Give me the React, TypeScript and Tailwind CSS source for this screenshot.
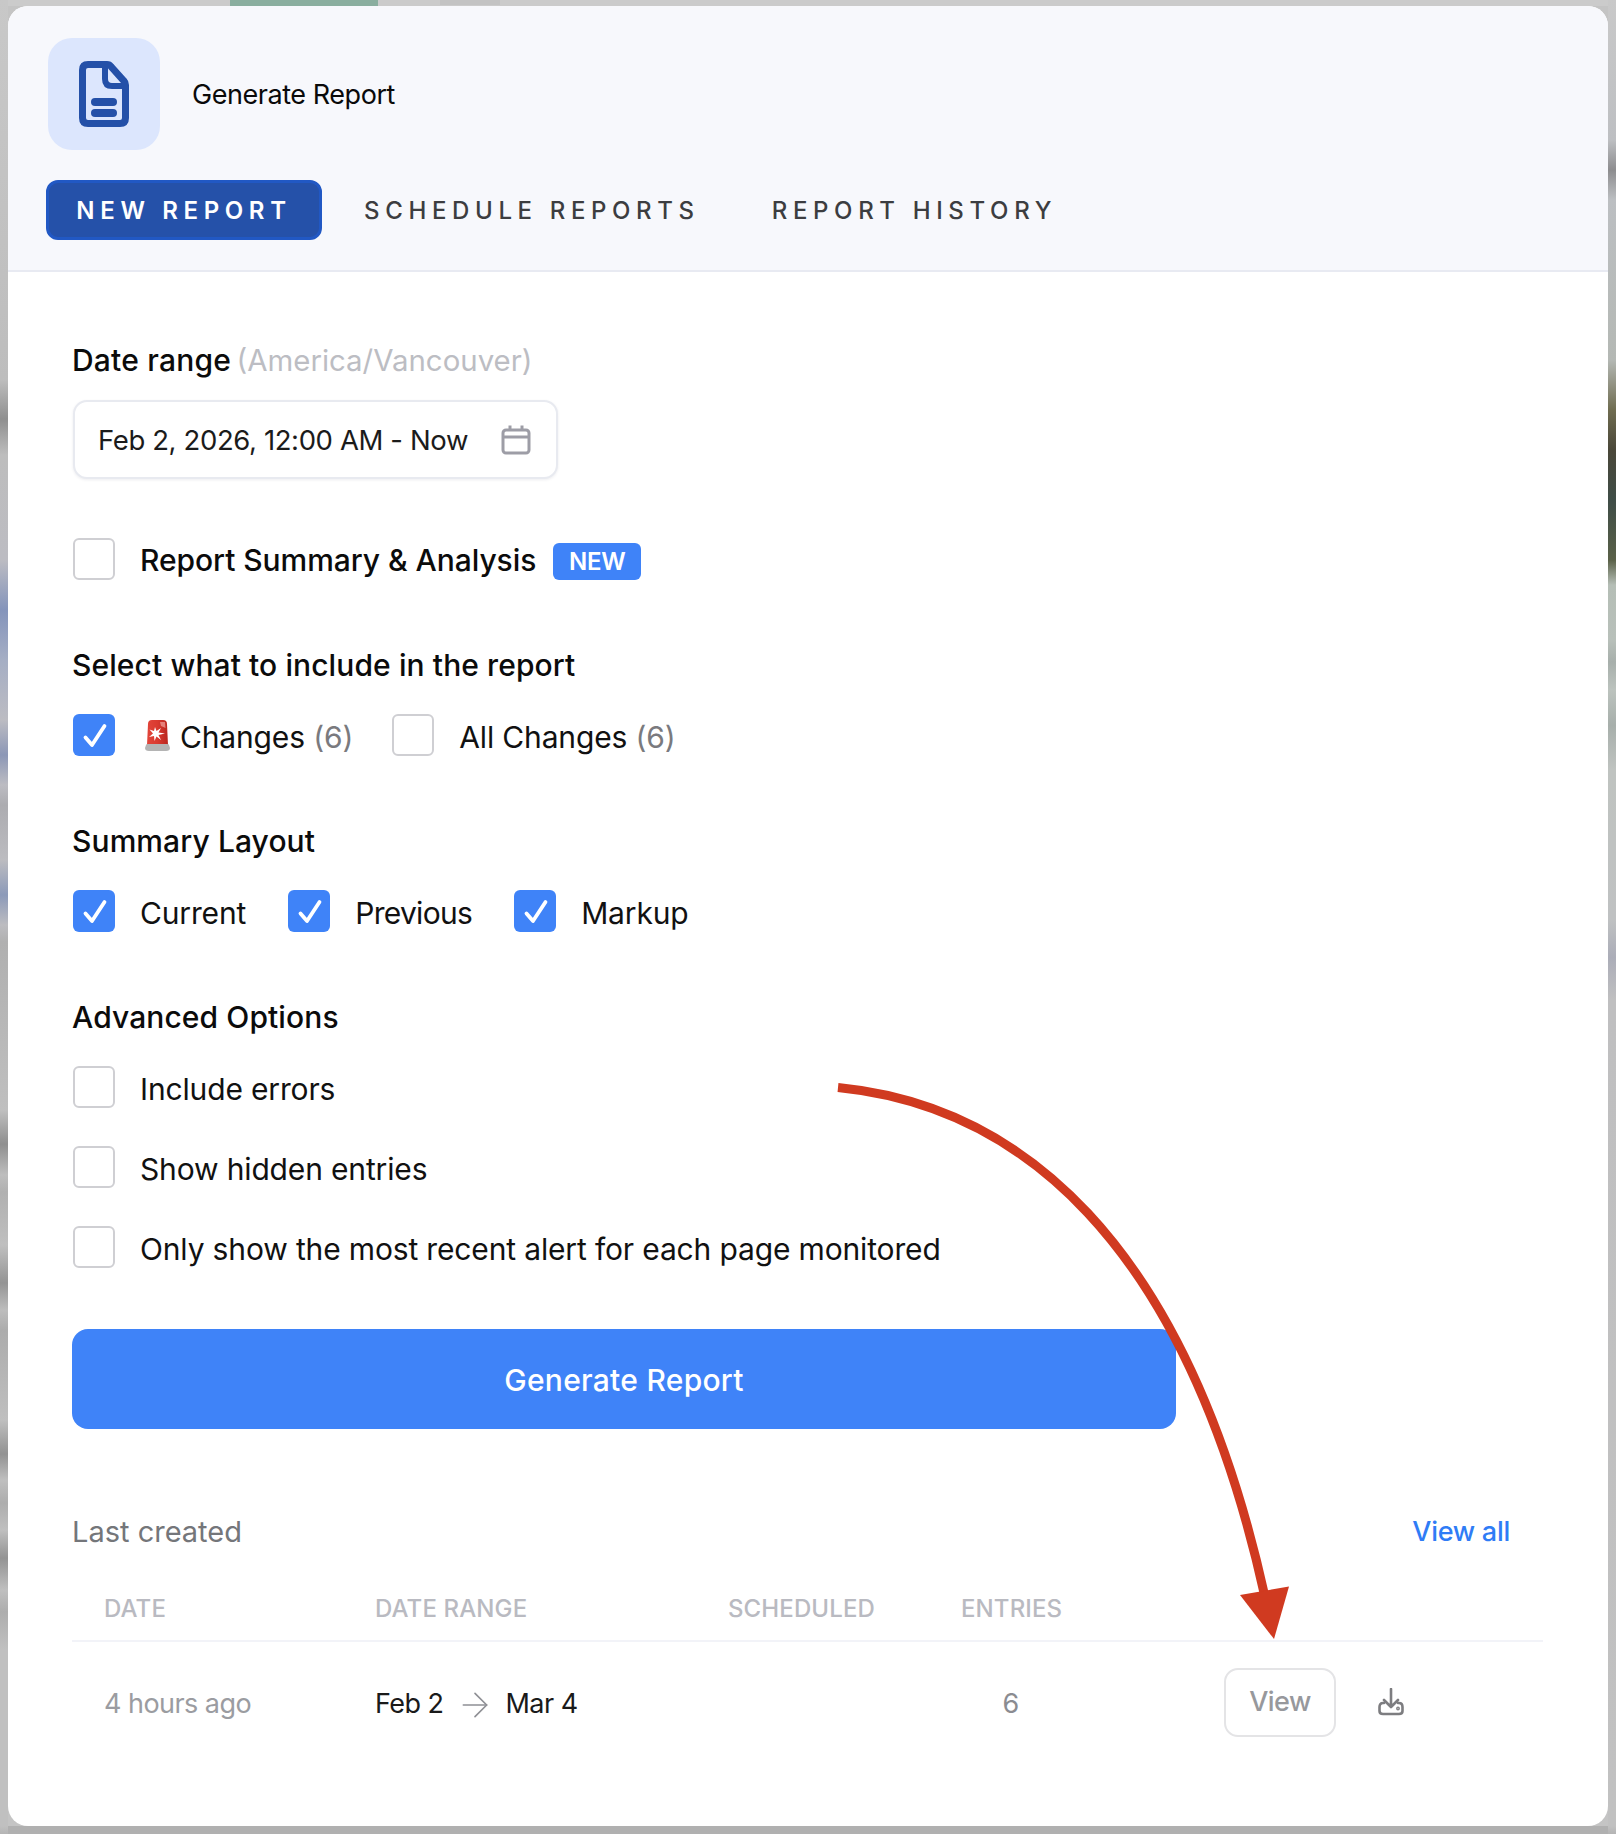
import React from "react";
import { ArrowRight } from "lucide-react";

const font = { fontFamily: '"Inter", "Liberation Sans", sans-serif' };

function Box({ checked = false }: { checked?: boolean }) {
  if (checked) {
    return (
      <span className="ml-[1px] block h-[42px] w-[42px] shrink-0 rounded-[6px] bg-[#3f83f8]">
        <svg width="42" height="42" viewBox="0 0 42 42" fill="none">
          <path d="M12.5 23.5 L19 31 L31.5 12" stroke="#fff" strokeWidth="3.8" strokeLinecap="round" strokeLinejoin="round" />
        </svg>
      </span>
    );
  }
  return <span className="ml-[1px] block h-[42px] w-[42px] shrink-0 rounded-[6px] border-2 border-[#cfcfd3] bg-white" />;
}

function Option({ checked, narrow, children }: { checked?: boolean; narrow?: boolean; children: React.ReactNode }) {
  return (
    <div className={narrow ? "flex h-[42px] items-center gap-[25px] text-[30px] tracking-[-0.7px] text-[#111]" : "flex h-[42px] items-center gap-[25px] text-[30px] tracking-[-0.15px] text-[#111]"}>
      <Box checked={checked} />
      <span className="whitespace-nowrap pt-[4px] leading-[38px]">{children}</span>
    </div>
  );
}

function Heading({ children }: { children: React.ReactNode }) {
  return <h3 className="h-[40px] pt-[2px] text-[30px] font-medium leading-[40px] tracking-[0.1px] text-[#0b0b0b]">{children}</h3>;
}

function Siren() {
  return (
    <svg width="25" height="32" viewBox="0 0 25 32" className="shrink-0">
      <defs>
        <linearGradient id="dome" x1="0" y1="0" x2="1" y2="0">
          <stop offset="0" stopColor="#e2453a" />
          <stop offset="0.5" stopColor="#d93a30" />
          <stop offset="1" stopColor="#b9261f" />
        </linearGradient>
      </defs>
      <path d="M3 5 Q3 1 7 1 H18 Q22 1 22 5 L23 26 H2 Z" fill="url(#dome)" />
      <path d="M1 26 Q1 25 3 25 H22 Q24 25 24 26 L25 29 Q25 32 21 32 H4 Q0 32 0 29 Z" fill="#b4b4b4" />
      <path d="M10 8 L11.5 12 L16 9 L13.5 13.5 L20 14.5 L13.5 16 L16 21 L11.5 17.5 L9.5 22 L9 17 L4 18 L8 14.5 L4.5 10.5 L9 12 Z" fill="#fff" />
      <path d="M15 3 H20 L20.5 9 L16 7 Z" fill="#f2a39c" opacity="0.7" />
    </svg>
  );
}

export default function App() {
  return (
    <div style={font} className="relative h-[1834px] w-[1616px] overflow-hidden bg-[#c4c4c4] pl-[8px] pt-[6px]">
      {/* blurred page behind the modal */}
      <div className="absolute left-0 right-0 top-0 h-[6px] bg-[#cbcbcb]" />
      <div className="absolute left-[230px] top-0 h-[6px] w-[148px] bg-[#8aae9f]" />
      <div className="absolute left-[440px] top-0 h-[5px] w-[60px] bg-[#c3c3c3]" />
      <div className="absolute bottom-0 left-0 right-0 h-[8px] bg-[#b0b0b0]" />
      <div className="absolute bottom-0 left-0 top-0 w-[8px] bg-[linear-gradient(to_bottom,#c8c8c8_0,#bdbdbd_380px,#8f8f8f_419px,#bdbdbd_455px,#bcbcc2_560px,#8494bb_610px,#a5aec4_660px,#bcbcc2_720px,#8c97b6_755px,#bcbcc2_785px,#acacb0_805px,#bcbcc0_860px,#8c9ab9_895px,#bcbcc0_925px,#b0b0b0_942px,#bfbfbf_1110px,#8f8f8f_1144px,#bdbdbd_1175px,#b0b0b0_1192px,#bfbfbf_1245px,#949494_1283px,#bdbdbd_1310px,#acacac_1330px,#bfbfbf_1420px,#929292_1454px,#bfbfbf_1480px,#adadad_1503px,#bfbfbf_1530px,#939393_1558px,#bfbfbf_1590px,#adadad_1612px,#c0c0c0_1650px,#c0c0c0_1826px,#b4b4b4_1834px)]" />
      <div className="absolute bottom-0 right-0 top-0 w-[8px] bg-[linear-gradient(to_bottom,#c9c9c9_0,#bdbfc2_140px,#8d8d8f_170px,#bcbfc2_200px,#b4b8b4_360px,#6f6c50_410px,#4a4739_450px,#3f4d47_500px,#5a6148_560px,#b5beb6_585px,#b8c0ba_640px,#a7afab_662px,#bcc3be_690px,#a7afab_725px,#bfc3c0_770px,#bfc1c2_920px,#abadb8_957px,#bfbfc0_1000px,#c1c1c1_1826px,#b4b4b4_1834px)]" />

      {/* card */}
      <div className="relative h-[1820px] w-[1600px] overflow-hidden rounded-[20px] bg-white">
        <header className="h-[266px] border-b-2 border-[#e8eaf2] bg-[#f7f8fc] pl-[40px] pt-[32px]">
          <div className="flex h-[112px] items-center gap-[32px]">
            <div className="flex h-[112px] w-[112px] items-center justify-center rounded-[24px] bg-[#dce6fd]">
              <svg width="50" height="66" viewBox="0 0 50 66" fill="none">
                <path d="M9 3.5 H28 Q30.5 3.5 32 5.5 L45 20 Q46.5 21.5 46.5 24 V57 Q46.5 62.5 41 62.5 H9 Q3.5 62.5 3.5 57 V9 Q3.5 3.5 9 3.5 Z" stroke="#2450a8" strokeWidth="7" />
                <path d="M26 4 V18 Q26 25 33 25 H46" stroke="#2450a8" strokeWidth="6" />
                <rect x="12" y="37" width="26" height="8" rx="4" fill="#2450a8" />
                <rect x="12" y="48" width="26" height="8" rx="4" fill="#2450a8" />
              </svg>
            </div>
            <span className="pt-[2px] text-[27px] leading-[40px] tracking-[-0.45px] text-[#0a0a0a]">Generate Report</span>
          </div>
          <nav className="-ml-[2px] mt-[30px] flex h-[60px] items-center text-[24px] font-medium tracking-[0.235em]">
            <span className="flex h-[60px] w-[276px] items-center justify-center rounded-[12px] border-[3px] border-[#2158c4] bg-[#2551a9] pt-[2px] font-semibold text-white">NEW REPORT</span>
            <span className="ml-[42px] whitespace-nowrap pt-[2px] text-[#3c3d40]">SCHEDULE REPORTS</span>
            <span className="ml-[72px] whitespace-nowrap pt-[2px] text-[#3c3d40]">REPORT HISTORY</span>
          </nav>
        </header>

        <main className="pl-[64px] pr-[65px] pt-[68px]">
          <h3 className="h-[40px] whitespace-nowrap leading-[40px]">
            <span className="text-[30px] font-medium tracking-[0.2px] text-[#0b0b0b]">Date range</span>{" "}
            <span className="ml-[1px] text-[29.4px] text-[#bcbdc3]">(America/Vancouver)</span>
          </h3>
          <div className="ml-[1px] mt-[20px] flex h-[79px] w-[485px] items-center justify-between rounded-[14px] border-2 border-[#e8eaf0] bg-white pl-[23px] pr-[25px] shadow-[0_1px_3px_rgba(20,30,60,0.08)]">
            <span className="whitespace-nowrap pt-[2px] text-[27.5px] tracking-[-0.38px] text-[#1b1b1b]">Feb 2, 2026, 12:00 AM - Now</span>
            <svg width="30" height="30" viewBox="0 0 30 30" fill="none" stroke="#9d9da6" strokeWidth="3">
              <rect x="2" y="5" width="26" height="23" rx="3" />
              <path d="M2 12 H28 M9 0.5 V5 M21 0.5 V5" />
            </svg>
          </div>

          <div className="mt-[59px] flex h-[42px] items-center">
            <Box />
            <span className="ml-[25px] whitespace-nowrap pt-[2px] text-[30px] font-medium leading-[40px] tracking-[-0.05px] text-[#0b0b0b]">Report Summary &amp; Analysis</span>
            <span className="ml-[17px] mt-[5px] flex h-[37px] w-[88px] items-center justify-center rounded-[6px] bg-[#3f83f8] text-[24px] font-semibold tracking-[-0.01em] text-white">NEW</span>
          </div>

          <div className="mt-[63px]"><Heading>Select what to include in the report</Heading></div>
          <div className="mt-[31px] flex items-center gap-[38px]">
            <div className="flex h-[42px] items-center text-[30px] tracking-[-0.15px] text-[#111]">
              <Box checked />
              <span className="ml-[30px]"><Siren /></span>
              <span className="ml-[10px] whitespace-nowrap pt-[4px] leading-[38px]">Changes <span className="text-[#7a7a7e]">(6)</span></span>
            </div>
            <Option>All Changes <span className="text-[#7a7a7e]">(6)</span></Option>
          </div>

          <div className="mt-[63px]"><Heading>Summary Layout</Heading></div>
          <div className="mt-[31px] flex items-center gap-[41px]">
            <Option checked>Current</Option>
            <Option checked narrow>Previous</Option>
            <Option checked>Markup</Option>
          </div>

          <div className="mt-[63px]"><Heading>Advanced Options</Heading></div>
          <div className="mt-[31px] flex flex-col gap-[38px]">
            <Option>Include errors</Option>
            <Option>Show hidden entries</Option>
            <Option>Only show the most recent alert for each page monitored</Option>
          </div>

          <button className="mt-[61px] flex h-[100px] w-[1104px] items-center justify-center rounded-[16px] bg-[#3f83f8] pt-[2px] text-[30px] font-medium tracking-[0.27px] text-white">
            Generate Report
          </button>

          <div className="mt-[83px] flex h-[40px] items-center justify-between pr-[33px]">
            <span className="text-[29px] text-[#74767a]">Last created</span>
            <span className="text-[27px] font-medium tracking-[-0.01em] text-[#2f7cf6]">View all</span>
          </div>

          <div className="mt-[37px] grid h-[53px] grid-cols-[271px_353px_233px_99px] items-start border-b-2 border-[#f2f3f8] pl-[32px] text-[24px] font-medium leading-[40px] tracking-[0.005em] text-[#b9bac1]">
            <span>DATE</span>
            <span>DATE RANGE</span>
            <span>SCHEDULED</span>
            <span>ENTRIES</span>
          </div>
          <div className="grid h-[125px] grid-cols-[271px_353px_233px_99px_164px_112px_42px_1fr] items-center pl-[32px] text-[27px] tracking-[-0.02em]">
            <span className="text-[#9b9ca1]">4 hours ago</span>
            <span className="flex items-center text-[#1a1a1a]">
              <span>Feb 2</span>
              <ArrowRight size={40} strokeWidth={1} className="mx-[11px] text-[#8f9095]" />
              <span>Mar 4</span>
            </span>
            <span />
            <span className="text-center text-[#8b8c91]">6</span>
            <span />
            <span className="-mt-[4px] flex h-[69px] items-center justify-center rounded-[14px] border-2 border-[#e4e4e6] text-[27px] font-medium text-[#97989c]">View</span>
            <span />
            <svg className="-mt-[5px]" width="26" height="28" viewBox="0 0 26 28" fill="none" stroke="#7d7d80" strokeWidth="2.6" strokeLinecap="round" strokeLinejoin="round">
              <path d="M13 1 V18 M6 12 L13 19 L20 12" />
              <path d="M6 15 H5 Q1.5 15 1.5 19 V23 Q1.5 26 5 26 H21 Q24.5 26 24.5 23 V19 Q24.5 15 21 15 H20" />
              <circle cx="20" cy="20.5" r="0.6" fill="#7d7d80" />
            </svg>
          </div>
        </main>

        {/* hand-drawn annotation arrow lying over the card */}
        <svg className="pointer-events-none absolute left-[-8px] top-[-6px]" width="1616" height="1834" viewBox="0 0 1616 1834" fill="none">
          <path d="M838 1087.5 C1015 1105 1185 1235 1265 1597" stroke="#d03a20" strokeWidth="9" />
          <path d="M1240 1595 L1289 1586.5 L1274 1639 Z" fill="#d03a20" />
        </svg>
      </div>
    </div>
  );
}
